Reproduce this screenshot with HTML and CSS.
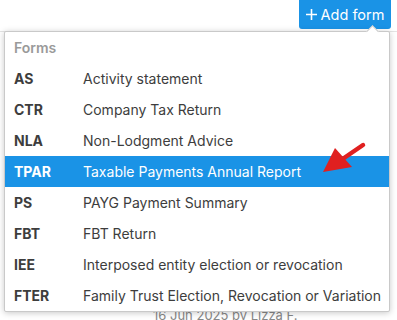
FILE: index.html
```html
<!DOCTYPE html>
<html lang="en">
<head>
  <meta charset="UTF-8" />
  <title>Add form</title>
  <link rel="stylesheet" href="styles.css">
</head>
<body>
  <div class="page">
    <div class="toolbar">
      <button class="add-btn">
        <svg class="plus" width="11" height="11" viewBox="0 0 11 11">
          <path d="M5.5 0v11M0 5.5h11" stroke="#fff" stroke-width="1.6" />
        </svg>
        Add form
      </button>
    </div>
    <div class="content">
      <div class="meta">16 Jun 2025 by Lizza F.</div>
    </div>

    <div class="menu">
      <div class="caret"></div>
      <div class="menu-head">Forms</div>
      <div class="item"><span class="code">AS</span><span class="desc">Activity statement</span></div>
      <div class="item"><span class="code">CTR</span><span class="desc">Company Tax Return</span></div>
      <div class="item"><span class="code">NLA</span><span class="desc">Non-Lodgment Advice</span></div>
      <div class="item active"><span class="code">TPAR</span><span class="desc">Taxable Payments Annual Report</span></div>
      <div class="item"><span class="code">PS</span><span class="desc">PAYG Payment Summary</span></div>
      <div class="item"><span class="code">FBT</span><span class="desc">FBT Return</span></div>
      <div class="item"><span class="code">IEE</span><span class="desc">Interposed entity election or revocation</span></div>
      <div class="item"><span class="code">FTER</span><span class="desc">Family Trust Election, Revocation or Variation</span></div>
    </div>

    <svg class="arrow" width="50" height="40" viewBox="0 0 50 40">
      <line x1="43" y1="4" x2="24" y2="17" stroke="#e02020" stroke-width="4.5" stroke-linecap="round" />
      <polygon points="3,31 15,7 32,26" fill="#e02020" />
    </svg>
  </div>
</body>
</html>
```

FILE: styles.css
```css
:root {
  --blue: #1a93e6;
  --text: #3d3d3d;
  --muted: #9a9a9a;
}

body {
  margin: 0;
  background: #fff;
  font-family: 'Inter', 'Noto Sans', sans-serif;
}

.page {
  position: relative;
  width: 397px;
  height: 320px;
  overflow: hidden;
}

.toolbar {
  display: flex;
  justify-content: flex-end;
  padding-right: 6px;
  height: 32px;
  border-bottom: 1px solid #e4e4e4;
  box-sizing: border-box;
}

.add-btn {
  margin-top: -4px;
  height: 33px;
  width: 92px;
  padding: 4px 0 0 0;
  border: none;
  border-radius: 3px;
  background: var(--blue);
  color: #fff;
  font-family: inherit;
  font-size: 14.5px;
  display: flex;
  align-items: center;
  justify-content: center;
  gap: 4px;
}

.content {
  display: flex;
  flex-direction: column;
  justify-content: flex-end;
  height: 288px;
  padding-left: 153px;
}

.meta {
  font-size: 13px;
  color: #888;
  margin-bottom: -3px;
}

.menu {
  position: absolute;
  left: 4px;
  top: 31px;
  width: 384px;
  background: #fff;
  border: 1px solid #c9c9c9;
  border-radius: 2px;
  box-shadow: 0 1px 6px rgba(0, 0, 0, 0.22);
}

.caret {
  position: absolute;
  top: -5px;
  right: 12px;
  width: 8px;
  height: 8px;
  background: #fff;
  border-left: 1px solid #c9c9c9;
  border-top: 1px solid #c9c9c9;
  transform: rotate(45deg);
}

.menu-head {
  height: 31px;
  line-height: 31px;
  padding-left: 9px;
  font-size: 14px;
  font-weight: 600;
  color: var(--muted);
}

.item {
  display: flex;
  height: 31px;
  align-items: center;
  padding-left: 9px;
  font-size: 14px;
  color: var(--text);
}

.code {
  width: 69px;
  font-weight: 700;
}

.item.active {
  background: var(--blue);
  color: #fff;
}

.arrow {
  position: absolute;
  left: 320px;
  top: 141px;
}
```
